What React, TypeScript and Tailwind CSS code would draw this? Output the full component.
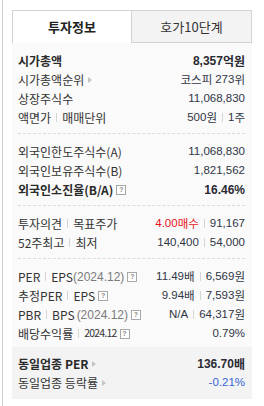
import React from "react";

const KR = "font-['Noto_Sans_CJK_KR',sans-serif]";
const NUM = "font-['Liberation_Sans','Noto_Sans_CJK_KR',sans-serif]";

function Bar() {
  return <span className="inline-block w-px h-[9px] bg-[#d5d5d5] mx-[5px] align-middle" />;
}

function Help() {
  return (
    <span className="inline-flex items-center justify-center w-[10px] h-[10px] border border-[#a8a8a8] ml-[3px] text-[7px] leading-none text-[#888] font-bold font-['Liberation_Sans',sans-serif] bg-white">
      ?
    </span>
  );
}

function Tri() {
  return <span className="inline-block ml-[4px] w-0 h-0 border-l-[4px] border-l-[#c4c4c4] border-y-[3px] border-y-transparent" />;
}

function Row({ left, right, bold }: { left: React.ReactNode; right: React.ReactNode; bold?: boolean }) {
  return (
    <div className="flex items-center justify-between h-[19px]">
      <div className={`flex items-center ${KR} ${bold ? "text-[12px] font-bold text-[#2a2a2a]" : "text-[12px] text-[#333]"} leading-none whitespace-nowrap`}>
        {left}
      </div>
      <div className={`flex items-center ${NUM} ${bold ? "text-[12px] font-bold text-[#2b2b33]" : "text-[11.5px] text-[#2f3645]"} leading-none whitespace-nowrap`}>
        {right}
      </div>
    </div>
  );
}

const K = ({ children }: { children: React.ReactNode }) => <span className={KR}>{children}</span>;

function Section({ children, last }: { children: React.ReactNode; last?: boolean }) {
  return (
    <div className={`pt-[8px] ${last ? "pb-[4px]" : "pb-[6px] border-b border-dashed border-[#dcdcdc]"}`}>{children}</div>
  );
}

export default function App() {
  return (
    <div className="flex w-[264px] h-[406px] bg-white">
      <div className="ml-[2px] border-l border-[#cfcfcf] flex-1 pl-[9px] pr-[12px] pt-[10px]">
        <div className="flex h-[33px]">
          <div className={`w-[119px] border-t border-l border-[#d3d3d3] bg-white flex items-center justify-center ${KR} text-[13px] font-bold text-[#222]`}>
            투자정보
          </div>
          <div className={`flex-1 border border-[#d3d3d3] bg-[#f3f3f3] flex items-center justify-center ${KR} text-[13px] text-[#333]`}>
            호가10단계
          </div>
        </div>
        <div className="bg-[#fafafa] px-[6px] pr-[7px]">
          <Section>
            <Row bold left="시가총액" right={<><span>8,357</span><K>억원</K></>} />
            <Row left={<>시가총액순위<Tri /></>} right={<><K>코스피</K><span className="ml-[3px]">273</span><K>위</K></>} />
            <Row left="상장주식수" right="11,068,830" />
            <Row left={<>액면가<Bar />매매단위</>} right={<><span>500</span><K>원</K><Bar /><span>1</span><K>주</K></>} />
          </Section>
          <Section>
            <Row left="외국인한도주식수(A)" right="11,068,830" />
            <Row left="외국인보유주식수(B)" right="1,821,562" />
            <Row bold left={<>외국인소진율(B/A)<Help /></>} right="16.46%" />
          </Section>
          <Section>
            <Row
              left={<>투자의견<Bar />목표주가</>}
              right={<><span className="text-[#e8141c]">4.00</span><K><span className="text-[#e8141c]">매수</span></K><Bar /><span>91,167</span></>}
            />
            <Row left={<>52주최고<Bar />최저</>} right={<><span>140,400</span><Bar /><span>54,000</span></>} />
          </Section>
          <Section last>
            <Row
              left={<>PER<Bar />EPS<span className={`${NUM} text-[#7b7b7b]`}>(2024.12)</span><Help /></>}
              right={<><span>11.49</span><K>배</K><Bar /><span>6,569</span><K>원</K></>}
            />
            <Row left={<>추정PER<Bar />EPS<Help /></>} right={<><span>9.94</span><K>배</K><Bar /><span>7,593</span><K>원</K></>} />
            <Row
              left={<>PBR<Bar />BPS<span className={`${NUM} text-[#7b7b7b] ml-[2px]`}>(2024.12)</span><Help /></>}
              right={<><span>N/A</span><Bar /><span>64,317</span><K>원</K></>}
            />
            <Row left={<>배당수익률<Bar /><span className="text-[10.5px] tracking-[-0.8px]">2024.12</span><Help /></>} right="0.79%" />
          </Section>
        </div>
        <div className="bg-[#f3f3f3] px-[6px] pr-[7px] py-[7px]">
          <Row bold left={<>동일업종 PER<Tri /></>} right={<><span>136.70</span><K>배</K></>} />
          <Row left={<>동일업종 등락률<Tri /></>} right={<span className="text-[#3466d6]">-0.21%</span>} />
        </div>
      </div>
    </div>
  );
}
